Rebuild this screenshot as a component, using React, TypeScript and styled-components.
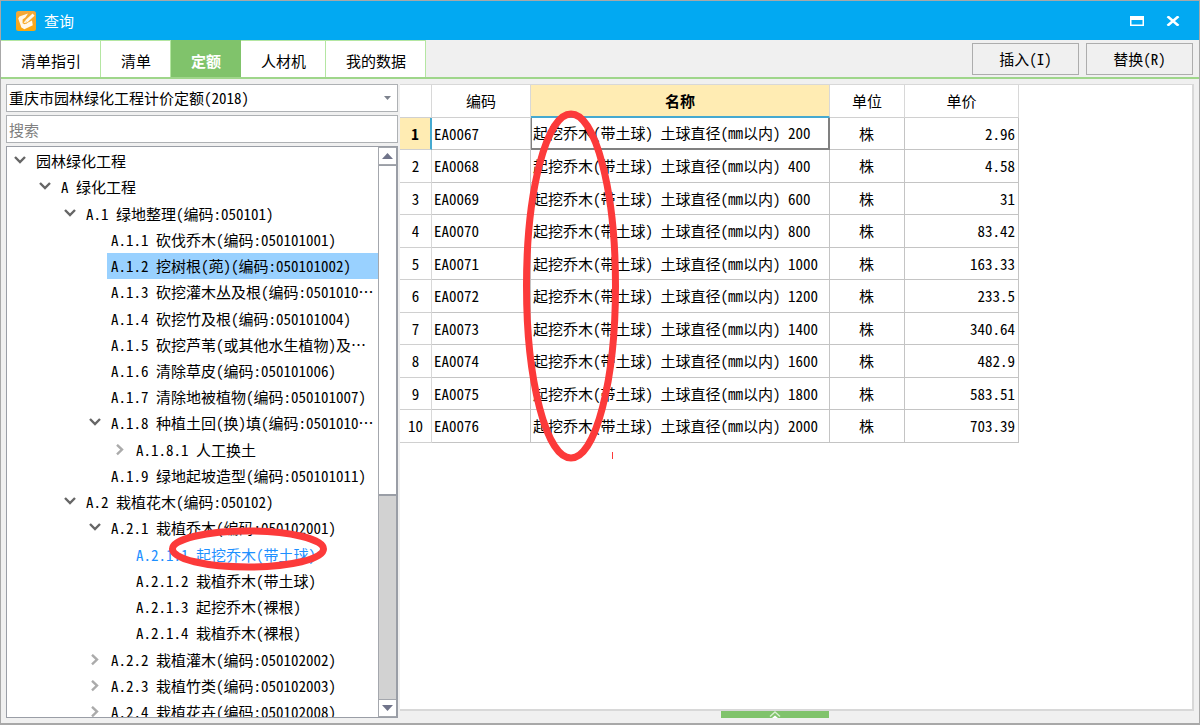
import React from 'react';
import styled, { createGlobalStyle, css } from 'styled-components';

const GlobalStyle = createGlobalStyle`
  * { box-sizing: border-box; }
  html, body, #root { height: 100%; }
  body {
    margin: 0;
    font-family: "Noto Sans CJK SC", sans-serif;
    font-size: 15px;
    font-feature-settings: "hwid";
    line-height: 20px;
    color: #000;
    background: #f0f0f0;
  }
  button, input, select { font: inherit; font-feature-settings: inherit; color: inherit; }
`;

const Window = styled.div`
  position: relative;
  display: flex;
  flex-direction: column;
  height: 100vh;
  min-height: 480px;
  border: 1px solid #a8a8a8;
  border-bottom-width: 2px;
  overflow: hidden;
`;

const TitleBar = styled.header`
  display: flex;
  align-items: center;
  flex: none;
  height: 39px;
  padding: 0 12px 0 15px;
  gap: 8px;
  background: #02a9f2;
  color: #fff;
`;

const Title = styled.h1`
  flex: 1;
  margin: 0;
  font-size: 15px;
  font-weight: 400;
`;

const WindowButton = styled.button`
  display: flex;
  align-items: center;
  justify-content: center;
  width: 28px;
  height: 24px;
  padding: 0;
  border: 0;
  background: none;
`;

const Toolbar = styled.div`
  display: flex;
  justify-content: space-between;
  flex: none;
  height: 39px;
  padding-right: 6px;
  border-bottom: 2px solid #9fd68b;
`;

const Tabs = styled.nav`
  display: flex;
`;

const Tab = styled.button<{ $active?: boolean }>`
  padding: 4px 19px 0 20px;
  border: 0;
  border-right: 1px solid #b4e6a2;
  border-top: 1px solid #b4e6a2;
  background: #fff;
  ${(p) => p.$active && css`
    border-color: #80c36b;
    background: #80c36b;
    color: #fff;
    font-weight: 700;
  `}
`;

const Actions = styled.div`
  display: flex;
  gap: 7px;
  padding: 3px 0 2px;
`;

const ActionButton = styled.button`
  width: 107px;
  padding: 0;
  border: 1px solid #adadad;
  background: #f0f0f0;
`;

const Body = styled.main`
  display: flex;
  flex: 1;
  min-height: 0;
  padding: 5px;
  gap: 2px;
`;

const Sidebar = styled.aside`
  display: flex;
  flex-direction: column;
  flex: none;
  width: 392px;
  gap: 3px;
`;

const SelectBox = styled.div`
  position: relative;
  display: flex;
  flex: none;
  height: 28px;
`;

const Select = styled.select`
  flex: 1;
  appearance: none;
  padding: 0 24px 0 2px;
  border: 1px solid #aeb1b4;
  border-radius: 0;
  background: #fff;
`;

const SelectArrow = styled.svg`
  position: absolute;
  right: 7px;
  top: 12px;
  pointer-events: none;
`;

const Search = styled.input`
  flex: none;
  height: 28px;
  padding: 0 2px;
  border: 1px solid #aeb1b4;
  background: #fff;
  &::placeholder { color: #808080; opacity: 1; }
`;

const TreePanel = styled.div`
  display: flex;
  flex: 1;
  min-height: 0;
  border: 2px solid #9a9ea6;
  border-width: 1px 2px 1px 1px;
  background: #fff;
  overflow: hidden;
`;

const Tree = styled.ul`
  display: flex;
  flex-direction: column;
  flex: 1;
  min-width: 0;
  margin: 1px 0 -8px;
  padding: 0;
  list-style: none;
`;

const TreeItem = styled.li<{ $level: number }>`
  display: flex;
  align-items: stretch;
  flex: 1 0 20px;
  padding-left: ${(p) => p.$level * 25 + 5}px;
`;

const Toggle = styled.span`
  display: flex;
  align-items: center;
  justify-content: center;
  flex: none;
  width: 16px;
  margin-right: 4px;
`;

const Label = styled.span<{ $selected?: boolean; $current?: boolean }>`
  display: flex;
  align-items: center;
  flex: 1;
  min-width: 0;
  padding-left: 4px;
  white-space: nowrap;
  background: ${(p) => (p.$selected ? '#99d1ff' : 'none')};
  color: ${(p) => (p.$current ? '#1e90ff' : 'inherit')};
`;

const ScrollBar = styled.div`
  display: flex;
  flex-direction: column;
  flex: none;
  width: 18px;
  border-left: 1px solid #a4a7ad;
  background: #d2d2d2;
`;

const ScrollButton = styled.button`
  display: flex;
  align-items: center;
  justify-content: center;
  flex: none;
  height: 18px;
  padding: 0;
  border: 1px solid #a4a7ad;
  border-width: 1px 0;
  background: #fff;
`;

const ScrollTrack = styled.div`
  flex: 1;
`;

const ScrollThumb = styled.div`
  height: 62%;
  border: solid #9a9ea6;
  border-width: 1px 0 2px;
  background: #fff;
`;

const Content = styled.section`
  display: flex;
  flex-direction: column;
  flex: 1;
  min-width: 0;
`;

const GridPanel = styled.div`
  flex: 1;
  min-height: 0;
  border: solid #d8d8d8;
  border-width: 1px 2px 2px 0;
  background: #fff;
  overflow: hidden;
`;

const Collapse = styled.button`
  display: flex;
  justify-content: center;
  align-self: center;
  flex: none;
  width: 108px;
  height: 7px;
  margin-right: 44px;
  padding: 0;
  border: 0;
  background: #80c36b;
`;

const DataTable = styled.table`
  width: 619px;
  table-layout: fixed;
  border-collapse: separate;
  border-spacing: 0;
`;

const Row = styled.tr`
  height: 32px;
  &:nth-child(even) { height: 33px; }
`;

const HeadCell = styled.th<{ $active?: boolean; $width: number }>`
  width: ${(p) => p.$width}px;
  height: 33px;
  padding: 0;
  border-right: 1px solid #d8d8d8;
  border-bottom: 1px solid #d0d0d0;
  font-weight: 400;
  ${(p) => p.$active && css`
    border-bottom: 2px solid #45a9d0;
    background: #ffecb3;
    font-weight: 700;
  `}
`;

const Cell = styled.td<{ $align?: string; $focus?: boolean }>`
  padding: 0 3px 0 2px;
  border-right: 1px solid #c4c4c4;
  border-bottom: 1px solid #c4c4c4;
  text-align: ${(p) => p.$align || 'left'};
  white-space: nowrap;
  ${(p) => p.$focus && css`
    padding-left: 1px;
    border: 2px solid #808080;
    border-width: 0 2px 2px 1px;
  `}
`;

const RowHead = styled.th<{ $active?: boolean }>`
  padding: 0;
  border-right: 1px solid #d8d8d8;
  border-bottom: 1px solid #d0d0d0;
  font-weight: 400;
  ${(p) => p.$active && css`
    border-right: 2px solid #45a9d0;
    background: #ffecb3;
    font-weight: 700;
  `}
`;

const Markup = styled.svg`
  position: absolute;
  left: 0;
  top: 0;
  pointer-events: none;
`;

type Node = { level: number; text: string; open?: boolean; selected?: boolean; current?: boolean };

const nodes: Node[] = [
  { level: 0, text: '园林绿化工程', open: true },
  { level: 1, text: 'A 绿化工程', open: true },
  { level: 2, text: 'A.1 绿地整理(编码:050101)', open: true },
  { level: 3, text: 'A.1.1 砍伐乔木(编码:050101001)' },
  { level: 3, text: 'A.1.2 挖树根(蔸)(编码:050101002)', selected: true },
  { level: 3, text: 'A.1.3 砍挖灌木丛及根(编码:0501010…' },
  { level: 3, text: 'A.1.4 砍挖竹及根(编码:050101004)' },
  { level: 3, text: 'A.1.5 砍挖芦苇(或其他水生植物)及…' },
  { level: 3, text: 'A.1.6 清除草皮(编码:050101006)' },
  { level: 3, text: 'A.1.7 清除地被植物(编码:050101007)' },
  { level: 3, text: 'A.1.8 种植土回(换)填(编码:0501010…', open: true },
  { level: 4, text: 'A.1.8.1 人工换土', open: false },
  { level: 3, text: 'A.1.9 绿地起坡造型(编码:050101011)' },
  { level: 2, text: 'A.2 栽植花木(编码:050102)', open: true },
  { level: 3, text: 'A.2.1 栽植乔木(编码:050102001)', open: true },
  { level: 4, text: 'A.2.1.1 起挖乔木(带土球)', current: true },
  { level: 4, text: 'A.2.1.2 栽植乔木(带土球)' },
  { level: 4, text: 'A.2.1.3 起挖乔木(裸根)' },
  { level: 4, text: 'A.2.1.4 栽植乔木(裸根)' },
  { level: 3, text: 'A.2.2 栽植灌木(编码:050102002)', open: false },
  { level: 3, text: 'A.2.3 栽植竹类(编码:050102003)', open: false },
  { level: 3, text: 'A.2.4 栽植花卉(编码:050102008)', open: false },
];

const prices = ['2.96', '4.58', '31', '83.42', '163.33', '233.5', '340.64', '482.9', '583.51', '703.39'];
const rows = prices.map((price, i) => ({
  code: `EA00${67 + i}`,
  name: `起挖乔木(带土球) 土球直径(mm以内) ${(i + 1) * 200}`,
  price,
}));

function Chevron({ open }: { open: boolean }) {
  return (
    <svg width="12" height="12" viewBox="0 0 12 12" fill="none" strokeWidth="2.4">
      {open
        ? <path d="M1 2 6 7 11 2" stroke="#666" />
        : <path d="M3 .8 8 5.6 3 10.4" stroke="#ababab" />}
    </svg>
  );
}

function Logo() {
  return (
    <svg width="20" height="20" viewBox="0 0 20 20">
      <defs>
        <linearGradient id="logo" x1="0" y1="0" x2="0" y2="1">
          <stop offset="0" stopColor="#f3a83c" />
          <stop offset="1" stopColor="#fba70c" />
        </linearGradient>
      </defs>
      <rect width="20" height="20" rx="2.5" fill="url(#logo)" />
      <path d="M12 2.6 3.4 5.4 2.2 7.4 5.4 16.6 8.4 18.2 16.8 14.2 16 9.6 12 11.6 8.6 13.2 6.6 12.2 6.6 8.4 9.4 6.4Z" fill="#fff8ea" />
      <path d="M17.4 3.6 9 11.2" stroke="#f7a928" strokeWidth="4.2" />
      <path d="M17.6 3.6 10.2 10.4" stroke="#fff8ea" strokeWidth="2.8" />
      <path d="M9.2 9.4 7.6 12 11 11.4Z" fill="#fff8ea" />
    </svg>
  );
}

export default function App() {
  return (
    <Window>
      <GlobalStyle />
      <TitleBar>
        <Logo />
        <Title>查询</Title>
        <WindowButton aria-label="最大化">
          <svg width="14" height="10" viewBox="0 0 14 10"><path d="M0 0h14v10H0zM1.5 4v4.5h11V4z" fill="#fff" fillRule="evenodd" /></svg>
        </WindowButton>
        <WindowButton aria-label="关闭">
          <svg width="14" height="10" viewBox="0 0 14 10"><path d="M1.5 .3 12.5 9.7M12.5 .3 1.5 9.7" stroke="#fff" strokeWidth="2.6" /></svg>
        </WindowButton>
      </TitleBar>
      <Toolbar>
        <Tabs>
          <Tab>清单指引</Tab>
          <Tab>清单</Tab>
          <Tab $active>定额</Tab>
          <Tab>人材机</Tab>
          <Tab>我的数据</Tab>
        </Tabs>
        <Actions>
          <ActionButton>插入(I)</ActionButton>
          <ActionButton>替换(R)</ActionButton>
        </Actions>
      </Toolbar>
      <Body>
        <Sidebar>
          <SelectBox>
            <Select aria-label="定额库">
              <option>重庆市园林绿化工程计价定额(2018)</option>
            </Select>
            <SelectArrow width="7" height="4" viewBox="0 0 7 4"><path d="M0 0h7L3.5 4z" fill="#7d828d" /></SelectArrow>
          </SelectBox>
          <Search aria-label="搜索" placeholder="搜索" />
          <TreePanel>
            <Tree>
              {nodes.map((n) => (
                <TreeItem key={n.text} $level={n.level}>
                  <Toggle>{n.open !== undefined && <Chevron open={n.open} />}</Toggle>
                  <Label $selected={n.selected} $current={n.current}>{n.text}</Label>
                </TreeItem>
              ))}
            </Tree>
            <ScrollBar>
              <ScrollButton aria-label="向上">
                <svg width="11" height="6" viewBox="0 0 11 6"><path d="M0 6h11L5.5 0z" fill="#70748a" /></svg>
              </ScrollButton>
              <ScrollTrack><ScrollThumb /></ScrollTrack>
              <ScrollButton aria-label="向下">
                <svg width="11" height="6" viewBox="0 0 11 6"><path d="M0 0h11L5.5 6z" fill="#70748a" /></svg>
              </ScrollButton>
            </ScrollBar>
          </TreePanel>
        </Sidebar>
        <Content>
          <GridPanel>
            <DataTable>
              <thead>
                <tr>
                  <HeadCell $width={32} aria-label="序号" />
                  <HeadCell $width={99}>编码</HeadCell>
                  <HeadCell $width={299} $active>名称</HeadCell>
                  <HeadCell $width={75}>单位</HeadCell>
                  <HeadCell $width={114}>单价</HeadCell>
                </tr>
              </thead>
              <tbody>
                {rows.map((r, i) => (
                  <Row key={r.code}>
                    <RowHead scope="row" $active={i === 0}>{i + 1}</RowHead>
                    <Cell>{r.code}</Cell>
                    <Cell $focus={i === 0}>{r.name}</Cell>
                    <Cell $align="center">株</Cell>
                    <Cell $align="right">{r.price}</Cell>
                  </Row>
                ))}
              </tbody>
            </DataTable>
          </GridPanel>
          <Collapse aria-label="展开">
            <svg width="12" height="7" viewBox="0 0 12 7"><path d="M1 5.5 6 1 11 5.5" fill="none" stroke="#d9efd1" strokeWidth="1.4" /><path d="M3 7 6 4.4 9 7z" fill="#fff" /></svg>
          </Collapse>
        </Content>
      </Body>
      <Markup width="640" height="600" viewBox="1 1 640 600" fill="none" stroke="#fc3a3a" strokeWidth="7">
        <ellipse cx="571" cy="286" rx="44.5" ry="172" />
        <ellipse cx="248" cy="549" rx="75.5" ry="18" />
        <path d="M612.5 452v7" strokeWidth="1" />
      </Markup>
    </Window>
  );
}
